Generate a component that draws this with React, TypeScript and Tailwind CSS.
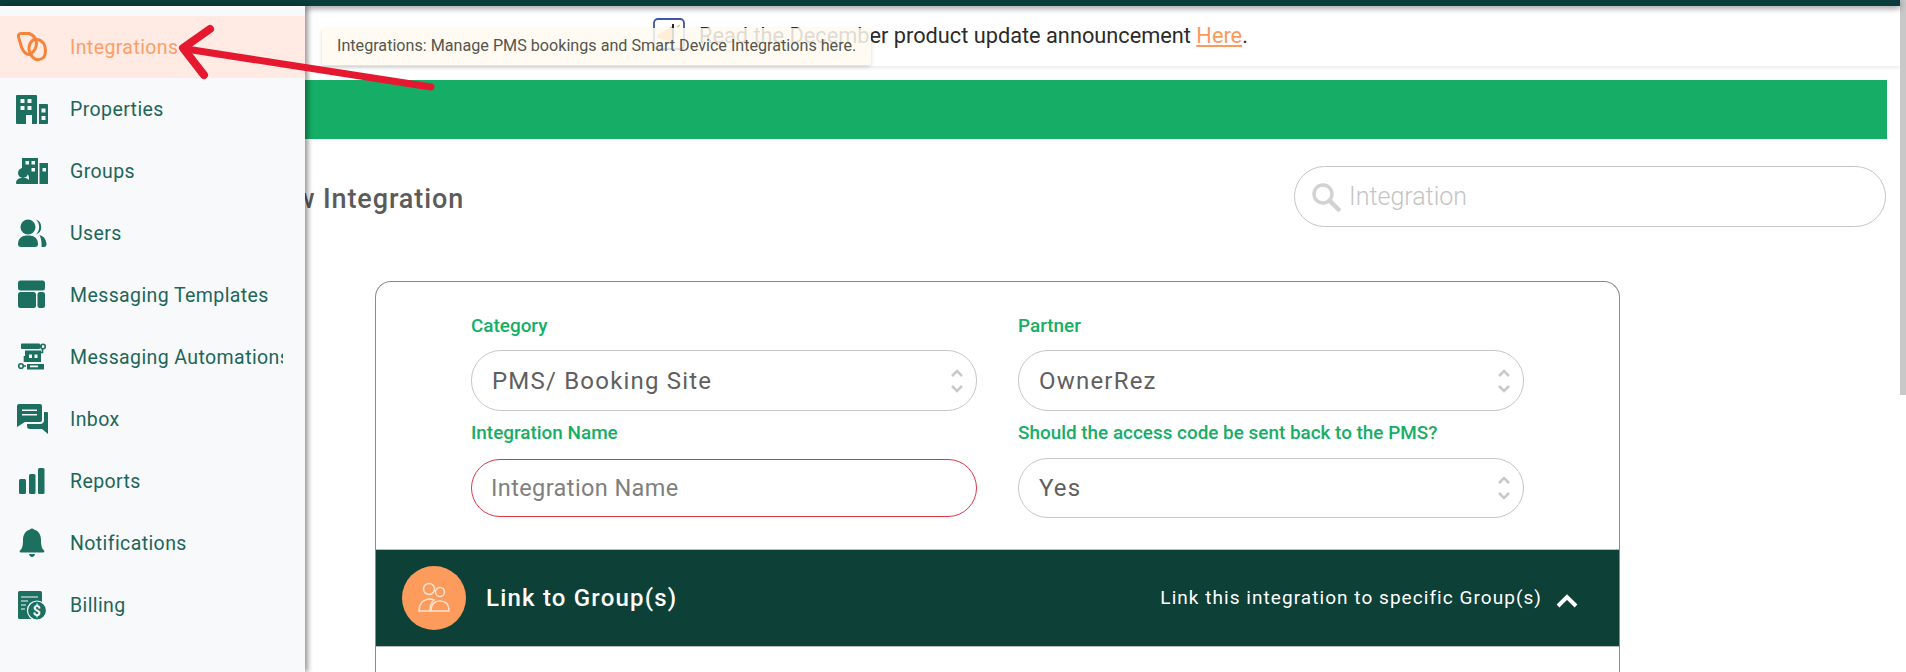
import type { ReactNode } from 'react';

const icons: Record<string, ReactNode> = {
  integrations: (
    <g fill="none" stroke="#f58339" strokeWidth="3" strokeLinejoin="round">
      <path d="M2.500 6 Q2 2.500 5 2.500 L13 2.500 Q20 5 20.500 12 Q20.500 19 14 23.500 Q8.500 24 5.500 16 Z" />
      <path d="M17 9 Q24 7 28 13 Q31 20 28 26 Q24 30 19 28 Q14 25 13 18 Q13 12 17 9Z" />
    </g>
  ),
  properties: (
    <g fill="#1d6f60">
      <path
        fillRule="evenodd"
        d="M1 2h19a1 1 0 0 1 1 1v27a1 1 0 0 1-1 1h-4v-9h-6v9H1a1 1 0 0 1-1-1V3a1 1 0 0 1 1-1ZM4.500 6v4h4V6Zm7 0v4h4V6Zm-7 7v4h4v-4Zm7 0v4h4v-4Z"
      />
      <path
        fillRule="evenodd"
        d="M23 11h8a1 1 0 0 1 1 1v18a1 1 0 0 1-1 1h-8ZM25.500 15.500v4h4v-4Zm0 7.500v4h4v-4Z"
      />
    </g>
  ),
  groups: (
    <g fill="#1d6f60">
      <path
        fillRule="evenodd"
        d="M6 3h16v26H13v-6a6 6 0 0 0-4-5.500V15H6ZM9.500 6v3.500H13V6Zm6 0v3.500H19V6Zm0 7v3.500H19V13Z"
      />
      <path fillRule="evenodd" d="M23.500 8H32v21h-8.500ZM26.500 13v3.500H30V13Z" />
      <circle cx="7" cy="18" r="5" />
      <path d="M0 27a6 6 0 0 1 6-4h2a6 6 0 0 1 6 4v1a1 1 0 0 1-1 1H1a1 1 0 0 1-1-1Z" />
    </g>
  ),
  users: (
    <g fill="#1d6f60">
      <circle cx="12" cy="10" r="7.500" />
      <path d="M2 27c0-6 4-8.500 10-8.500s10 2.500 10 8.500c0 2-1 3-3 3H5c-2 0-3-1-3-3Z" />
      <path d="M20 2.500a8 8 0 0 1 0 15 10.500 10.500 0 0 0 0-15ZM23.500 18c5 1.500 7 5.500 7 9.500 0 1.500-1 2.500-2.500 2.500h-2.500c.5-4-.5-9-2-12Z" />
    </g>
  ),
  templates: (
    <g fill="#1d6f60">
      <rect x="2" y="1.500" width="27" height="10" rx="2.500" />
      <rect x="2" y="13" width="18" height="16" rx="2.500" />
      <rect x="21.500" y="13" width="7.500" height="16" rx="2.500" />
    </g>
  ),
  automation: (
    <g>
      <rect x="5" y="2.500" width="19" height="5.500" rx="1" fill="#1d6f60" />
      <path d="M24 5.500h2M26.500 8v3.500h-3M8.500 21v-6M7 25h3" fill="none" stroke="#1d6f60" strokeWidth="1.600" />
      <circle cx="27" cy="5.500" r="2.300" fill="none" stroke="#1d6f60" strokeWidth="1.600" />
      <circle cx="5" cy="25" r="2.300" fill="none" stroke="#1d6f60" strokeWidth="1.600" />
      <path
        fill="#1d6f60"
        fillRule="evenodd"
        d="M9 9.500h16V21H9ZM13 13.500v3.500h3v-3.500Zm5.500 0v3.500h3v-3.500Z"
      />
      <path fill="#1d6f60" fillRule="evenodd" d="M11 23h17v5.500H11ZM14 24.500v1.700h8v-1.700Z" />
    </g>
  ),
  inbox: (
    <g fill="#1d6f60">
      <path
        fillRule="evenodd"
        d="M3 1h21a2 2 0 0 1 2 2v14a2 2 0 0 1-2 2H9l-8 5a1 1 0 0 1 0-1V3a2 2 0 0 1 2-2ZM6 6.500V8h15V6.500ZM6 11v1.500h15V11Z"
      />
      <path d="M28 9h3a1 1 0 0 1 1 1v21l-6-5H14a3 3 0 0 1-3-3v-2h13a4 4 0 0 0 4-4Z" />
    </g>
  ),
  reports: (
    <g fill="#1d6f60">
      <rect x="3" y="14" width="7" height="15" rx="1.500" />
      <rect x="13" y="9" width="6.500" height="20" rx="1.500" />
      <rect x="22" y="3" width="6.500" height="26" rx="1.500" />
    </g>
  ),
  bell: (
    <g fill="#1d6f60">
      <path d="M14 2.500a2.500 2.500 0 0 1 4 0c5 1.500 7 5.500 7 10.500 0 6 1 9 3 10.500 1 .8 0 2-1 2H5c-1 0-2-1.200-1-2C6 22 7 19 7 13c0-5 2-9 7-10.500Z" />
      <path d="M13 27h6c-.5 2-1.500 3-3 3s-2.500-1-3-3Z" />
    </g>
  ),
  billing: (
    <g>
      <rect x="2" y="2" width="24" height="28" rx="1.500" fill="#1d6f60" />
      <path d="M5 8h17M5 12h7M5 16h5M5 20h4" stroke="#f8f9fb" strokeWidth="1.200" />
      <circle cx="21" cy="21.500" r="9.500" fill="#1d6f60" stroke="#f8f9fb" strokeWidth="1.200" />
      <text x="21" y="26.500" textAnchor="middle" fontFamily="Roboto, sans-serif" fontSize="14" fontWeight="700" fill="#f8f9fb">
        $
      </text>
    </g>
  ),
};

const navItems = [
  { key: 'integrations', label: 'Integrations' },
  { key: 'properties', label: 'Properties' },
  { key: 'groups', label: 'Groups' },
  { key: 'users', label: 'Users' },
  { key: 'templates', label: 'Messaging Templates' },
  { key: 'automation', label: 'Messaging Automations' },
  { key: 'inbox', label: 'Inbox' },
  { key: 'reports', label: 'Reports' },
  { key: 'bell', label: 'Notifications' },
  { key: 'billing', label: 'Billing' },
];

function Sidebar() {
  return (
    <aside className="absolute left-0 top-[6px] bottom-0 z-20 w-[305px] bg-[#f8f9fb] pt-[10px] shadow-[3px_0_5px_rgba(0,0,0,0.4)]">
      {navItems.map((item, i) => (
        <div
          key={item.key}
          className={`flex h-[62px] items-center gap-[22px] pl-4 text-[19.500px] tracking-[0.4px] ${
            i === 0 ? 'bg-[#ffeae4] text-[#fb9f68]' : 'text-[#1d665a]'
          }`}
        >
          <svg className="h-8 w-8 shrink-0" viewBox="0 0 32 32">
            {icons[item.key]}
          </svg>
          <span className="w-[213px] overflow-hidden whitespace-nowrap pt-[2px]">{item.label}</span>
        </div>
      ))}
    </aside>
  );
}

function Chevrons() {
  return (
    <svg className="h-7 w-4 shrink-0" viewBox="0 0 16 28" fill="none" stroke="#c9c9c9" strokeWidth="2.500">
      <path d="M3 9l5-5 5 5M3 19l5 5 5-5" />
    </svg>
  );
}

function SelectBox({ value, className = '' }: { value: string; className?: string }) {
  return (
    <div
      className={`flex items-center justify-between rounded-[30px] border border-[#c6c6c6] pl-[20px] pr-[11px] text-[24px] tracking-[1.200px] text-[#5f5f5f] ${className}`}
    >
      <span>{value}</span>
      <Chevrons />
    </div>
  );
}

function FieldLabel({ children }: { children: ReactNode }) {
  return <div className="text-[18.900px] font-medium leading-[22px] text-[#16ae66]">{children}</div>;
}

export default function App() {
  return (
    <div className="relative flex h-[672px] w-[1906px] overflow-hidden bg-white font-['Roboto',sans-serif]">
      <div className="flex min-w-0 flex-1 flex-col">
        <div className="z-10 h-[6px] shrink-0 bg-[#0b3d3a] shadow-[0_2px_6px_rgba(0,0,0,0.45)]" />

        {/* Announcement */}
        <div className="flex h-[60px] shrink-0 items-center pl-[653px] shadow-[0_2px_3px_rgba(0,0,0,0.08)]">
          <svg className="mb-[4px] h-[32px] w-8 shrink-0" viewBox="0 0 32 32">
            <rect x="1" y="1" width="30" height="30" rx="4" fill="#fff" stroke="#3f55a5" strokeWidth="1.800" />
            <path d="M4 17l16-9v17l-16-5Z" fill="#f5a94a" />
            <path d="M20 6v19" stroke="#111" strokeWidth="1.800" />
            <path d="M24 9l3-2M25 14h3" stroke="#e8c35a" strokeWidth="1.200" />
          </svg>
          <div className="ml-[14px] text-[21.750px] text-[#2b2b2b]">
            Read the December product update announcement{' '}
            <span className="text-[#fb9a5c] underline">Here</span>.
          </div>
        </div>

        <div className="flex min-h-0 flex-1 flex-col pl-[275px] pr-[13px] pt-[14px]">
          <div className="h-[59px] shrink-0 bg-[#16ae66]" />

          <div className="mt-[27px] flex shrink-0 items-center justify-between pr-[1px]">
            <h1 className="-ml-4 pt-[5px] text-[27px] font-medium tracking-[0.9px] text-[#5b5b5b]">New Integration</h1>
            <div className="flex h-[61px] w-[592px] items-center gap-[8px] rounded-full border border-[#c6c6c6] pl-[16px]">
              <svg className="h-[30px] w-[30px]" viewBox="0 0 30 30" fill="none" stroke="#d2d2d2">
                <circle cx="12" cy="12" r="9" strokeWidth="3.500" />
                <path d="M18.500 18.500l9 9" strokeWidth="4.500" strokeLinecap="round" />
              </svg>
              <input
                placeholder="Integration"
                className="min-w-0 flex-1 text-[25px] font-light outline-none placeholder:text-[#c4c4c4]"
              />
            </div>
          </div>

          {/* Form card */}
          <div className="ml-[100px] mt-[54px] flex w-[1245px] flex-1 flex-col overflow-hidden rounded-t-[16px] border border-b-0 border-[#8a8a8a]">
            <div className="grid h-[267px] shrink-0 grid-cols-[506px_506px] content-start gap-x-[41px] pl-[95px] pt-[33px]">
              <div>
                <FieldLabel>Category</FieldLabel>
                <SelectBox value="PMS/ Booking Site" className="mt-[13px] h-[61px]" />
              </div>
              <div>
                <FieldLabel>Partner</FieldLabel>
                <SelectBox value="OwnerRez" className="mt-[13px] h-[61px]" />
              </div>
              <div className="pt-[11px]">
                <FieldLabel>Integration Name</FieldLabel>
                <input
                  placeholder="Integration Name"
                  className="mt-[15px] h-[58px] w-full rounded-[30px] border border-[#dc3545] px-[19px] text-[23.500px] tracking-[0.4px] outline-none placeholder:text-[#808080]"
                />
              </div>
              <div className="pt-[11px]">
                <FieldLabel>Should the access code be sent back to the PMS?</FieldLabel>
                <SelectBox value="Yes" className="mt-[14px] h-[60px]" />
              </div>
            </div>

            {/* Link to group band */}
            <div className="flex h-[98px] shrink-0 items-center justify-between border-y border-[#b5bdbb] bg-[#0d4037] pl-[26px] pr-[41px] text-white">
              <div className="flex items-center gap-[20px]">
                <div className="flex h-[64px] w-[64px] items-center justify-center rounded-full bg-[#fd9b5d]">
                  <svg className="h-[40px] w-[40px]" viewBox="0 0 40 40" fill="none" stroke="#fde3d0" strokeWidth="1.500">
                    <circle cx="15" cy="11" r="5.500" />
                    <circle cx="26" cy="14" r="4.500" />
                    <path d="M5 33c0-7 4-12 11-12 2 0 3 .5 4 1-3 2-4 6-4 11Z" />
                    <path d="M17 33c0-6 3-10 9-10s9 4 9 10Z" />
                  </svg>
                </div>
                <span className="text-[24px] font-medium tracking-[1.200px]">Link to Group(s)</span>
              </div>
              <div className="flex items-center gap-[14px]">
                <span className="text-[19px] tracking-[1.050px]">Link this integration to specific Group(s)</span>
                <svg className="mt-[6px] h-[14px] w-[22px]" viewBox="0 0 22 14" fill="none" stroke="#fff" strokeWidth="4">
                  <path d="M2 12l9-9 9 9" />
                </svg>
              </div>
            </div>
          </div>
        </div>
      </div>

      {/* Page scrollbar */}
      <div className="w-[6px] shrink-0 bg-white">
        <div className="h-[395px] bg-[#c8c8c8]" />
      </div>

      <Sidebar />

      {/* Tooltip */}
      <div className="absolute left-[322px] top-[28px] z-30 flex h-[37px] w-[549px] items-center rounded-[3px] bg-[rgba(255,250,240,0.85)] pl-[15px] text-[16.150px] text-[#55554f] shadow-[0_2px_4px_rgba(0,0,0,0.15)]">
        Integrations: Manage PMS bookings and Smart Device Integrations here.
      </div>

      {/* Annotation arrow */}
      <svg className="pointer-events-none absolute left-0 top-0 z-40 h-[120px] w-[460px]" viewBox="0 0 460 120" fill="none" stroke="#e5182f" strokeLinecap="round" strokeLinejoin="round">
        <path d="M431 87L186 49" strokeWidth="7" />
        <path d="M210 29L183 48L204 75" strokeWidth="8" />
      </svg>
    </div>
  );
}
